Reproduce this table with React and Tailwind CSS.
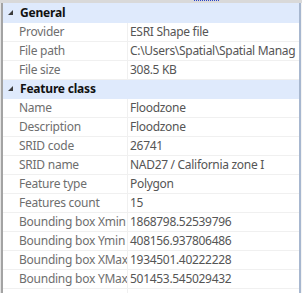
import React from 'react';

const SECTIONS = [
  {
    title: 'General',
    rows: [
      ['Provider', 'ESRI Shape file'],
      ['File path', 'C:\\Users\\Spatial\\Spatial Manag'],
      ['File size', '308.5 KB'],
    ],
  },
  {
    title: 'Feature class',
    rows: [
      ['Name', 'Floodzone'],
      ['Description', 'Floodzone'],
      ['SRID code', '26741'],
      ['SRID name', 'NAD27 / California zone I'],
      ['Feature type', 'Polygon'],
      ['Features count', '15'],
      ['Bounding box Xmin', '1868798.52539796'],
      ['Bounding box Ymin', '408156.937806486'],
      ['Bounding box XMax', '1934501.40222228'],
      ['Bounding box YMax', '501453.545029432'],
      ['', ''],
    ],
  },
];

function Expander() {
  return (
    <svg width="6" height="6" viewBox="0 0 6 6" className="shrink-0">
      <polygon points="5,0 5,5 0,5" fill="#3c3c3c" />
    </svg>
  );
}

export default function App() {
  return (
    <div
      className="w-[302px] h-[293px] overflow-hidden bg-white flex flex-col text-[12px] leading-none"
      style={{ fontFamily: '"Noto Sans", "Open Sans", sans-serif' }}
    >
      {/* top strip */}
      <div className="h-[3px] shrink-0 bg-[#d9d9d9] flex">
        <div className="ml-[194px] w-[25px] h-[1px] border-t border-dotted border-[#2a44c8]" />
      </div>

      <div className="flex flex-1 min-h-0">
        <div className="w-[1px] bg-[#e4e4e4]" />
        <div className="w-[2px] bg-[#a3a3a3]" />

        <div className="flex-1 flex flex-col min-w-0">
          {SECTIONS.map((s, i) => (
            <div key={s.title}>
              <div className={`${i === 0 ? 'h-[20px]' : 'h-[19px]'} bg-[#dfeafc] flex items-center pl-[5px] gap-[6px] border-b border-[#dfeafc]`}>
                <Expander />
                <span className="font-bold text-[#111] tracking-[-0.2px]">{s.title}</span>
              </div>
              {s.rows.map(([k, v], j) => (
                <div key={j} className="h-[19px] flex border-b border-[#f0f0f0]">
                  <div className="w-[125px] shrink-0 pl-[16px] flex items-center text-[#6e6e6e] border-r border-[#f0f0f0] whitespace-nowrap overflow-hidden tracking-[-0.25px]">
                    {k}
                  </div>
                  <div className="flex-1 pl-[2px] flex items-center text-[#555] whitespace-nowrap overflow-hidden tracking-[-0.3px]">
                    {v}
                  </div>
                </div>
              ))}
            </div>
          ))}
        </div>

        <div className="w-[2px] bg-[#a7b7cf]" />
        <div className="w-[1px] bg-[#f4f4f4]" />
      </div>
    </div>
  );
}
